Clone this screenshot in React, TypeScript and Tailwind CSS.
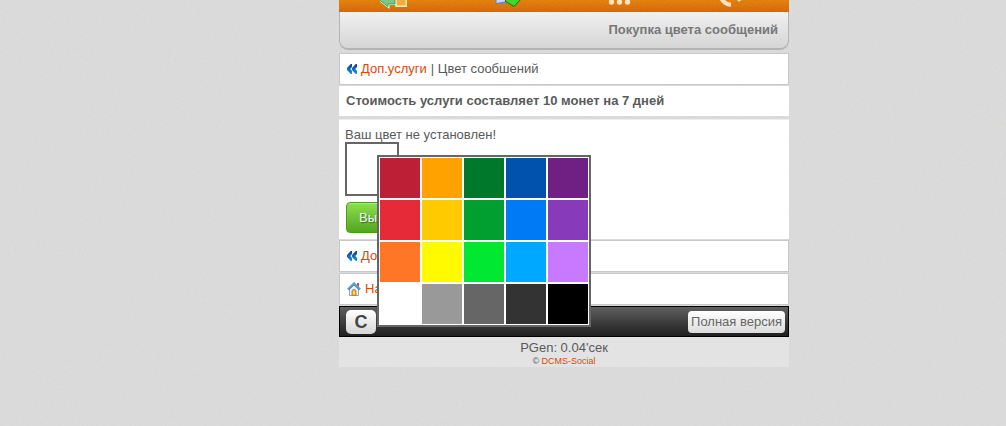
import { useState } from 'react';

const COLORS = [
  '#bd2036', '#ffa200', '#00782b', '#0052ad', '#702082',
  '#e62a37', '#ffca00', '#009f2f', '#007bf5', '#873bbb',
  '#ff7626', '#fffa00', '#00e831', '#00a8ff', '#c77aff',
  '#ffffff', '#999999', '#666666', '#333333', '#000000',
];

const Grain = ({ id, className }: { id: string; className: string }) => (
  <svg aria-hidden="true" className={`pointer-events-none absolute inset-0 h-full w-full ${className}`}>
    <filter id={id}>
      <feTurbulence type="fractalNoise" baseFrequency="0.6" numOctaves="2" stitchTiles="stitch" />
    </filter>
    <rect width="100%" height="100%" filter={`url(#${id})`} />
  </svg>
);

const BackIcon = () => (
  <svg width="10" height="10" viewBox="0 0 10 10" aria-hidden="true" className="shrink-0">
    <defs>
      <linearGradient id="back" x1="0" y1="0" x2="0" y2="1">
        <stop offset="0" stopColor="#0a3c9c" />
        <stop offset="1" stopColor="#1492e6" />
      </linearGradient>
    </defs>
    <path d="M5 0v3L3.200 5 5 7v3H3.800L0 6V4L3.800 0zM10 0v3L8.200 5 10 7v3H8.800L5 6V4L8.800 0z" fill="url(#back)" />
  </svg>
);

const HomeIcon = () => (
  <svg width="14" height="14" viewBox="0 0 14 14" aria-hidden="true" className="shrink-0">
    <path d="M10 1h2v4l-2-2z" fill="#b9543c" />
    <path d="M2.500 7 7 2.700 11.500 7v6.500h-9z" fill="#f0f1f4" stroke="#8c8f99" strokeWidth=".8" />
    <path d="M5 13.400V8.500Q7 6 9 8.500v4.900z" fill="#f5b52c" stroke="#a9733a" strokeWidth=".8" />
    <path d="M6.300 12.500V9.500h1.400v3z" fill="#ffe680" />
    <path d="M1 7.500 7 1.700l6 5.800" fill="none" stroke="#2f7fc6" strokeWidth="2.400" />
    <path d="M1.300 7 7 1.500 12.700 7" fill="none" stroke="#8cc6f2" strokeWidth=".9" />
  </svg>
);

const LoginIcon = () => (
  <svg width="30" height="24" viewBox="0 0 30 24" aria-hidden="true">
    <path d="M16 1h10.200v17.200H16z" fill="#f1ae3c" stroke="#fbe6b4" strokeWidth="1.500" />
    <path d="M0 12.500 7.500 5v4.500H15v6.500H8.500v3z" fill="#79c883" stroke="#e4f7df" strokeWidth="2" />
    <path d="M0 12.500 7.500 5v4.500H15v6.500H8v2.500z" fill="#79c883" stroke="#2d8a3c" strokeWidth=".7" />
  </svg>
);

const CheckIcon = () => (
  <svg width="28" height="24" viewBox="0 0 28 24" aria-hidden="true">
    <path d="M2 3 14 1l3 12-15 2.500z" fill="#c5d9ff" stroke="#567fca" />
    <path d="m11 13 4-4 4 2 5-8 3 8-7 7.500z" fill="#43d62c" stroke="#18680f" />
  </svg>
);

const MenuIcon = () => (
  <svg width="24" height="24" viewBox="0 0 24 24" fill="#ffe3bd" aria-hidden="true">
    {[3.500, 11.500, 19.500].map((x) => (
      <g key={x}>
        <circle cx={x} cy="6" r="2.700" />
        <circle cx={x} cy="14" r="2.700" />
      </g>
    ))}
  </svg>
);

const RefreshIcon = () => (
  <svg width="28" height="24" viewBox="0 0 28 24" fill="none" stroke="#ffe3bd" strokeWidth="4" aria-hidden="true">
    <path d="M1 5a12 12 0 0 0 11 11.800M18.500 12q4-1.500 5.500-5" />
  </svg>
);

const navItems = [
  { label: 'Вход', icon: <LoginIcon /> },
  { label: 'Готово', icon: <CheckIcon /> },
  { label: 'Меню', icon: <MenuIcon /> },
  { label: 'Обновить', icon: <RefreshIcon /> },
];

const NavRow = ({ children }: { children: React.ReactNode }) => (
  <div className="flex h-8 items-center border border-[#c8c8c8] bg-white px-[7px] whitespace-nowrap">{children}</div>
);

export default function App() {
  const [color, setColor] = useState('#ffffff');
  const [open, setOpen] = useState(true);

  return (
    <div className="relative min-h-screen bg-[#dcdcdc] pl-[122px] font-['Liberation_Sans',Arial,sans-serif] text-[13px] leading-4 text-[#5a5a5a]">
      <Grain id="page-grain" className="opacity-10" />
      <div className="relative mx-auto w-full max-w-[450px]">
        <nav className="relative grid h-3 grid-cols-4 grid-rows-1 items-end justify-items-center overflow-hidden bg-linear-to-b from-[#e67e00] to-[#d86100]">
          <Grain id="nav-grain" className="opacity-15" />
          {navItems.map((item) => (
            <a key={item.label} href="#" aria-label={item.label} className="relative">
              {item.icon}
            </a>
          ))}
        </nav>

        <h1 className="flex h-[38px] items-center justify-end rounded-b-[9px] border-x border-b-2 border-[#b4b4b4] bg-linear-to-b from-[#f1f1f1] to-[#d5d5d5] px-2.5 font-bold text-[#777]">
          Покупка цвета сообщений
        </h1>

        <main className="mt-[3px]">
          <NavRow>
            <BackIcon />
            <a href="#" className="ml-1 text-[#d94a00]">Доп.услуги</a>
            <span className="ml-1">| Цвет сообшений</span>
          </NavRow>
          <div className="mt-px flex h-[30px] items-center bg-white px-[7px] font-bold">
            Стоимость услуги составляет 10 монет на 7 дней
          </div>

          <section className="mt-[3px] border-t border-[#eee] bg-white px-1.5 pt-[7px] pb-1.5">
            <p className="leading-[15px]">Ваш цвет не установлен!</p>
            <div className="relative w-fit">
              <div className="size-[54px] border-2 border-[#666]" style={{ backgroundColor: color }} />
              {open && (
                <div className="absolute top-[13px] left-8 z-10 grid w-max grid-cols-5 gap-0.5 border-2 border-[#666] bg-white p-px">
                  {COLORS.map((value) => (
                    <button
                      key={value}
                      type="button"
                      aria-label={value}
                      className="size-10"
                      style={{ backgroundColor: value }}
                      onClick={() => {
                        setColor(value);
                        setOpen(false);
                      }}
                    />
                  ))}
                </div>
              )}
            </div>
            <button
              type="button"
              onClick={() => setOpen(!open)}
              className="mt-1.5 ml-px block h-[31px] rounded border border-[#4c9a1c] bg-linear-to-b from-[#8be04e] to-[#55a51f] px-3 text-[#eef6ff] shadow-[inset_0_1px_0_#a5ee70] text-shadow-[1px_1px_1px_#3c7010]"
            >
              Выбрать
            </button>
          </section>

          <div className="mt-px flex flex-col gap-px">
            <NavRow>
              <BackIcon />
              <a href="#" className="ml-1 text-[#d94a00]">Доп.услуги</a>
            </NavRow>
            <NavRow>
              <HomeIcon />
              <a href="#" className="ml-1 text-[#d94a00]">На главную</a>
            </NavRow>
          </div>
        </main>

        <footer>
          <div className="mt-px flex h-[31px] items-center justify-between border border-black bg-linear-to-b from-[#606060] to-[#202020] pr-[3px] pl-1.5">
            <a href="#" className="flex h-6 w-[30px] items-center justify-center rounded-[5px] bg-linear-to-b from-white to-[#d5d5d5] text-lg font-bold text-[#444]">
              C
            </a>
            <a href="#" className="flex h-[22px] items-center rounded bg-linear-to-b from-white to-[#dcdcdc] px-[3px] text-[#666]">
              Полная версия
            </a>
          </div>
          <div className="bg-[#e3e3e3] pt-[3px] text-center">
            <p>PGen: 0.04'сек</p>
            <p className="text-[9px] leading-[11px]">
              © <a href="#" className="text-[#d94a00]">DCMS-Social</a>
            </p>
          </div>
        </footer>
      </div>
    </div>
  );
}
